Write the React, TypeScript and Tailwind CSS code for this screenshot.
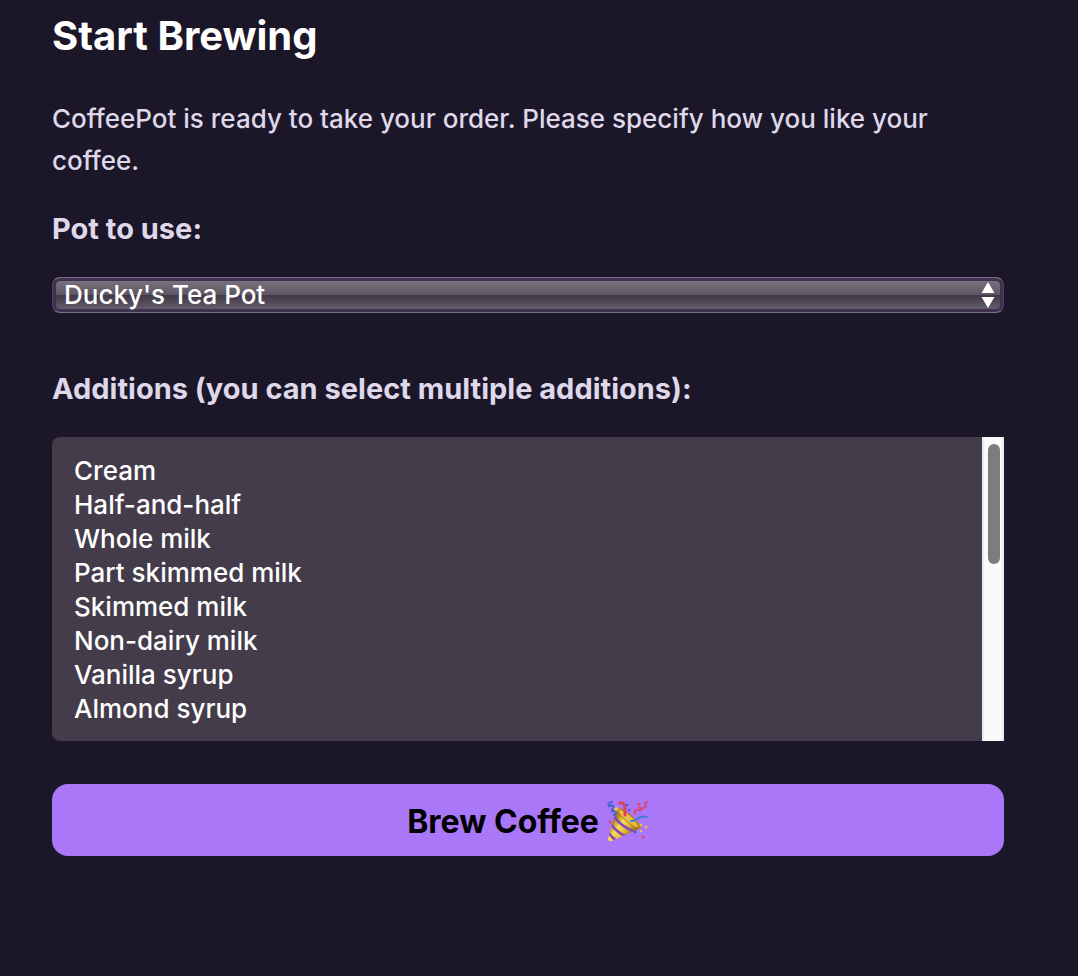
import { useId, useState } from "react";
import type { UIEvent } from "react";

const pots = ["Ducky's Tea Pot", "Kitchen Pot", "Office Pot"];

const additions = [
  "Cream",
  "Half-and-half",
  "Whole milk",
  "Part skimmed milk",
  "Skimmed milk",
  "Non-dairy milk",
  "Vanilla syrup",
  "Almond syrup",
  "Raspberry syrup",
  "Chocolate syrup",
  "Hazelnut syrup",
  "Caramel syrup",
  "Whisky",
  "Rum",
  "Kahlua",
  "Aquavit",
  "Sugar",
  "Brown sugar",
  "Honey",
  "Sweetener",
];

function PartyPopper() {
  const id = useId();
  const gold = `${id}-gold`;
  const cone = `${id}-cone`;
  return (
    <svg viewBox="0 0 42 42" className="size-[42px]" aria-hidden="true">
      <defs>
        <linearGradient id={gold} x1="6" y1="20" x2="24" y2="34" gradientUnits="userSpaceOnUse">
          <stop offset="0" stopColor="#a87c1c" />
          <stop offset="0.35" stopColor="#f8e05c" />
          <stop offset="0.65" stopColor="#e3bc3c" />
          <stop offset="1" stopColor="#98701c" />
        </linearGradient>
        <clipPath id={cone}>
          <path d="M10.500 7.500Q7 16 1 37Q1 41 5 40L34 27Q29 15 10.500 7.500Z" />
        </clipPath>
      </defs>
      <path d="M10.500 7.500Q7 16 1 37Q1 41 5 40L34 27Q29 15 10.500 7.500Z" fill={`url(#${gold})`} />
      <g clipPath={`url(#${cone})`} fill="none" stroke="#874bb8" strokeWidth="2.500">
        <path d="M7 15Q13 25 28 31" />
        <path d="M4 23Q10 32 19 35" />
        <path d="M1 31Q5 37 10 40" />
      </g>
      <path d="M10 8Q15 5 24 14Q34 23 34 27Q28 29 19 20Q9 12 10 8Z" fill="#b98222" />
      <path d="M12 9Q17 9 24 16Q31 23 31 26Q25 25 18 18Q11 12 12 9Z" fill="#e6c044" />
      <g fill="none" strokeLinecap="round">
        <path d="M5 1Q0 2 2 5Q8 3 6 8Q3 11 8 10Q10 13 7 14" stroke="#3f63cf" strokeWidth="2" />
        <path d="M13 2Q18 1 18 7V14" stroke="#dd4261" strokeWidth="3" />
        <path d="M28 13Q26 8 31 9Q36 10 33 7Q37 8 39 5Q37 1 40 1" stroke="#d84775" strokeWidth="2" />
        <path d="M24 20Q29 20 31 17Q35 15 40 16" stroke="#3d7ddf" strokeWidth="2" />
      </g>
      <g fill="#e34670">
        <circle cx="32" cy="3" r="1.500" />
        <circle cx="3" cy="21" r="1.500" />
        <circle cx="36" cy="36" r="1.500" />
      </g>
      <g fill="#3866cf">
        <circle cx="20" cy="4" r="1.300" />
        <circle cx="22" cy="9" r="1.300" />
        <circle cx="28" cy="31" r="1.500" />
      </g>
      <g fill="#f1b957">
        <path d="M9 5L10 7L12 6L11 8L13 9L10 9L9 11L8 9L6 8L8 7Z" />
        <circle cx="34" cy="24" r="1.500" />
        <circle cx="39" cy="26" r="1.500" />
        <circle cx="34" cy="30" r="1.300" />
      </g>
    </svg>
  );
}

function AdditionsList() {
  const [scroll, setScroll] = useState(0);

  function onScroll(event: UIEvent<HTMLSelectElement>) {
    const list = event.currentTarget;
    const range = list.scrollHeight - list.clientHeight;
    setScroll(range > 0 ? list.scrollTop / range : 0);
  }

  return (
    <div className="mt-[27px] flex rounded-l-lg bg-[#443c4b]">
      <select
        id="additions"
        multiple
        size={8}
        onScroll={onScroll}
        className="mb-[14px] ml-5 mt-[18px] h-[272px] min-w-0 flex-1 overflow-y-scroll bg-transparent p-0 text-[26px] text-white outline-none [scrollbar-width:none]"
      >
        {additions.map((addition) => (
          <option key={addition} className="h-[34px] min-h-0 px-[2px] py-0 font-medium leading-[34px]">
            {addition}
          </option>
        ))}
      </select>
      <div className="flex w-[22px] flex-col border-x-2 border-[#ececec] bg-[#fafafa] py-[7px] pl-1 pr-[2px]" aria-hidden="true">
        <div style={{ flexGrow: scroll }} />
        <div className="h-[120px] rounded-full bg-[#7d7d7d]" />
        <div style={{ flexGrow: 1 - scroll }} />
      </div>
    </div>
  );
}

export default function App() {
  return (
    <main className="min-h-screen bg-[#1c1728] pl-[52px] pr-[74px] pt-3 font-['Inter','Liberation_Sans',sans-serif] text-[#ded8ea]">
      <h1 className="text-[40px] font-bold leading-12 text-white">Start Brewing</h1>
      <form className="mt-[38px]" onSubmit={(event) => event.preventDefault()}>
        <p className="text-[26px] font-medium leading-[42px]">
          CoffeePot is ready to take your order. Please specify how you like your coffee.
        </p>

        <label htmlFor="pot" className="mt-[26px] block text-[29px] font-bold leading-[42px]">
          Pot to use:
        </label>
        <div className="relative mt-[27px]">
          <select
            id="pot"
            className="block h-9 w-full appearance-none rounded-lg border border-x-[#4b4259] border-y-[#77707f] bg-[linear-gradient(to_bottom,#7e7884_0%,#5c5563_50%,#403847_51%,#6b6472_100%)] px-[11px] text-[26px] font-medium leading-[34px] text-white shadow-[inset_0_0_0_3px_#403052]"
          >
            {pots.map((pot) => (
              <option key={pot} className="bg-[#443c4b]">{pot}</option>
            ))}
          </select>
          <svg
            viewBox="0 0 14 26"
            className="pointer-events-none absolute right-[9px] top-[5px] h-[26px] w-[14px] fill-white"
            aria-hidden="true"
          >
            <path d="M7 0L13.500 11H0.500ZM7 26L13.500 15H0.500Z" />
          </svg>
        </div>

        <label htmlFor="additions" className="mt-[55px] block text-[29px] font-bold leading-[42px]">
          Additions (you can select multiple additions):
        </label>
        <AdditionsList />

        <button
          type="submit"
          className="mt-[43px] flex h-[72px] w-full items-center justify-center gap-2 rounded-2xl bg-[#a977f8] pt-1 text-[32px] font-bold text-black"
        >
          Brew Coffee
          <PartyPopper />
        </button>
      </form>
    </main>
  );
}
